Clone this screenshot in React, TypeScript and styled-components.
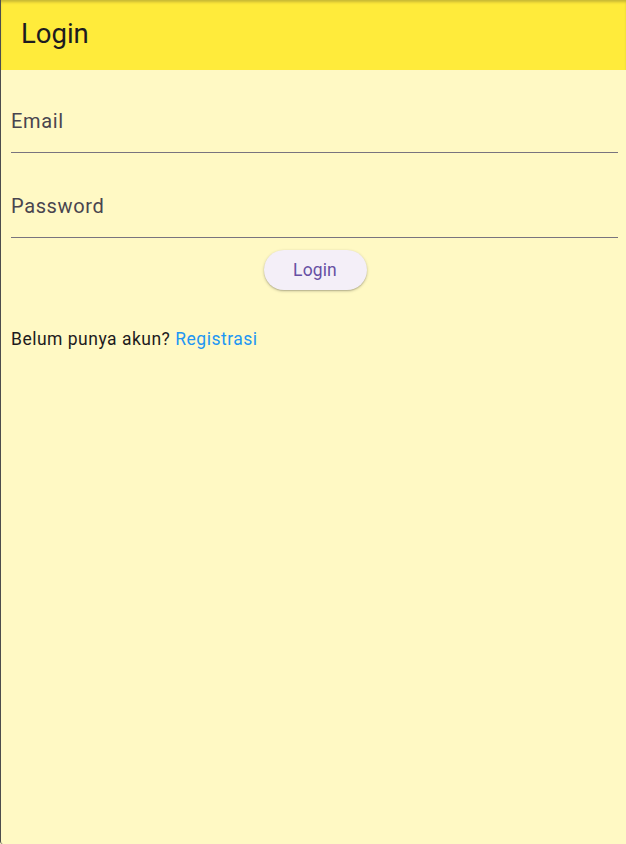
import React from "react";
import styled, { createGlobalStyle } from "styled-components";

const Global = createGlobalStyle`
  html, body { margin: 0; padding: 0; background: #FFF9C4; }
  body { font-family: Roboto, "Noto Sans", "Liberation Sans", sans-serif; }
  * { box-sizing: border-box; }
`;

const Screen = styled.div`
  width: 626px;
  height: 844px;
  background: #FFF9C4;
  border-left: 1px solid #4d4d4d;
  border-bottom-left-radius: 3px;
  border-bottom-right-radius: 3px;
  overflow: hidden;
  display: flex;
  flex-direction: column;
`;

const AppBar = styled.header`
  height: 70px;
  flex: none;
  background: #FFEB3B;
  display: flex;
  align-items: center;
  padding-left: 20px;
  box-shadow: inset 0 3px 3px -1px rgba(90, 80, 40, 0.35);
`;

const Title = styled.h1`
  margin: 0;
  font-weight: 400;
  font-size: 27.5px;
  color: #1d1b20;
  letter-spacing: 0;
  line-height: 1;
  padding-bottom: 2px;
`;

const Body = styled.main`
  padding: 10px 8px 10px 10px;
  display: flex;
  flex-direction: column;
`;

const Field = styled.label`
  display: flex;
  flex-direction: column;
  justify-content: flex-end;
  height: ${(p: { $h: number }) => p.$h}px;
  border-bottom: 1px solid #79747e;
  padding-bottom: 21px;
`;

const FieldLabel = styled.span`
  font-size: 20px;
  letter-spacing: 0.625px;
  color: #49454f;
  line-height: 1;
`;

const ButtonRow = styled.div`
  display: flex;
  justify-content: center;
  margin-top: 12px;
`;

const Button = styled.button`
  height: 40px;
  width: 103px;
  border: none;
  border-radius: 20px;
  background: #f4eff8;
  color: #6750a4;
  font-family: Roboto, "Noto Sans", sans-serif;
  font-size: 17.5px;
  font-weight: 400;
  letter-spacing: 0.125px;
  box-shadow: 0 1px 3px rgba(0, 0, 0, 0.25), 0 1px 1px rgba(0, 0, 0, 0.1);
  cursor: pointer;
  margin-left: 1px;
`;

const Footer = styled.p`
  margin: 41px 0 0 0;
  font-size: 17.5px;
  letter-spacing: 0.5px;
  color: #1d1b20;
  line-height: 1;
`;

const Link = styled.a`
  color: #2196f3;
  text-decoration: none;
`;

export default function App() {
  return (
    <>
      <Global />
      <Screen>
        <AppBar>
          <Title>Login</Title>
        </AppBar>
        <Body>
          <Field $h={73}>
            <FieldLabel>Email</FieldLabel>
          </Field>
          <Field $h={85}>
            <FieldLabel>Password</FieldLabel>
          </Field>
          <ButtonRow>
            <Button>Login</Button>
          </ButtonRow>
          <Footer>
            Belum punya akun? <Link href="#">Registrasi</Link>
          </Footer>
        </Body>
      </Screen>
    </>
  );
}
